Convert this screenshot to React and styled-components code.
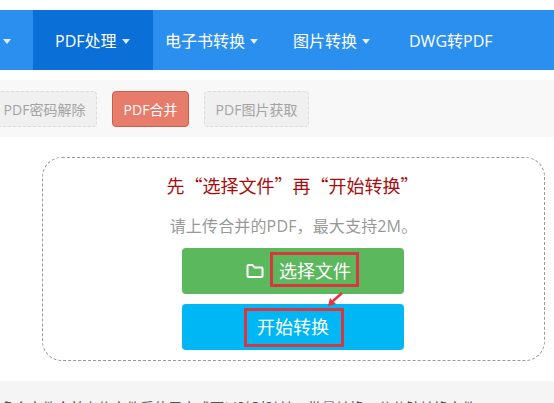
import React from 'react'
import styled, { createGlobalStyle } from 'styled-components'

const Global = createGlobalStyle`
  html, body { margin: 0; padding: 0; background: #fff; }
  body {
    width: 554px;
    height: 403px;
    overflow: hidden;
    font-family: "Open Sans", "Noto Sans CJK SC", sans-serif;
  }
`

const Page = styled.div`
  position: relative;
  padding-top: 10px;
  height: 393px;
  overflow: hidden;
`

const Nav = styled.nav`
  display: flex;
  height: 60px;
  background: #2b8ff0;
`

const NavItem = styled.a`
  display: flex;
  align-items: center;
  gap: 5px;
  flex: none;
  width: ${({ $w }) => $w}px;
  padding-left: ${({ $pad }) => $pad || 0}px;
  box-sizing: border-box;
  background: ${({ $active }) => ($active ? '#0a6fd6' : 'transparent')};
  color: #fff;
  font-size: 16px;
`

const Caret = styled.i`
  width: 0;
  height: 0;
  margin-top: 2px;
  margin-left: ${({ $ml }) => $ml || 0}px;
  border-left: 4px solid transparent;
  border-right: 4px solid transparent;
  border-top: 5px solid #fff;
  opacity: 0.85;
`

const SubBar = styled.div`
  display: flex;
  align-items: center;
  gap: 15px;
  height: 57px;
  margin-top: 10px;
  margin-left: -8px;
  background: #f8f8f8;
`

const Tag = styled.a`
  display: flex;
  align-items: center;
  justify-content: center;
  height: 36px;
  width: ${({ $w }) => $w}px;
  box-sizing: border-box;
  border-radius: 4px;
  font-size: 14px;
  border: 1px ${({ $on }) => ($on ? 'solid #c9604f' : 'dashed #dcdcdc')};
  background: ${({ $on }) => ($on ? '#e87c6b' : '#f0f0f0')};
  color: ${({ $on }) => ($on ? '#fff' : '#a3a3a3')};
`

const Main = styled.div`
  height: 244px;
  padding: 20px 0 0 42px;
  box-sizing: border-box;
`

const Drop = styled.div`
  width: 503px;
  height: 204px;
  box-sizing: border-box;
  border: 1px dashed #9a9a9a;
  border-radius: 20px;
  display: flex;
  flex-direction: column;
  align-items: center;
`

const Title = styled.div`
  margin: 15px 0 0 -2px;
  color: #a80d0d;
  font-family: "Noto Sans CJK SC", sans-serif;
  font-size: 18px;
  line-height: 24px;
`

const Hint = styled.div`
  margin-top: 18px;
  color: #999;
  font-size: 16px;
  line-height: 22px;
  letter-spacing: 0.15px;
`

const Btn = styled.a`
  display: flex;
  align-items: center;
  justify-content: center;
  width: 222px;
  height: 46px;
  margin: ${({ $mt }) => $mt}px 0 0 -1px;
  padding-left: ${({ $shift }) => $shift || 0}px;
  box-sizing: border-box;
  border-radius: 4px;
  color: #fff;
  font-size: 18px;
  background: ${({ $bg }) => $bg};
`

const FolderIcon = styled.svg`
  margin-right: 15px;
`

const Marked = styled.span`
  position: relative;
  display: block;
  line-height: 24px;
  &::after {
    content: '';
    position: absolute;
    left: -${({ $l }) => $l}px;
    right: -${({ $r }) => $r}px;
    top: -${({ $t }) => $t}px;
    bottom: -${({ $b }) => $b}px;
    border: 3px solid #d9373f;
  }
`

const Arrow = styled.svg`
  position: absolute;
  left: 326px;
  top: 290px;
`

const Footer = styled.div`
  background: #f5f5f5;
  height: 30px;
  padding-top: 18px;
  font-size: 14px;
  line-height: 18px;
  color: #555;
  white-space: nowrap;
  overflow: hidden;
`

export default function App() {
  return (
    <Page>
      <Global />
      <Nav>
        <NavItem $w={33}>
          <Caret $ml={3} />
        </NavItem>
        <NavItem $w={120} $pad={22} $active>
          PDF处理 <Caret />
        </NavItem>
        <NavItem $w={120} $pad={12}>
          电子书转换 <Caret />
        </NavItem>
        <NavItem $w={116} $pad={20}>
          图片转换 <Caret />
        </NavItem>
        <NavItem $w={120} $pad={20}>
          DWG转PDF
        </NavItem>
      </Nav>
      <SubBar>
        <Tag $w={105}>PDF密码解除</Tag>
        <Tag $w={77} $on>PDF合并</Tag>
        <Tag $w={105}>PDF图片获取</Tag>
      </SubBar>
      <Main>
        <Drop>
          <Title>先“选择文件”再“开始转换”</Title>
          <Hint>请上传合并的PDF，最大支持2M。</Hint>
          <Btn $bg="#5cb85c" $mt={11} $shift={11}>
            <FolderIcon width="18" height="16" viewBox="0 0 18 16" fill="none" stroke="#fff" strokeWidth="2" strokeLinejoin="round">
              <path d="M1.5 3a1 1 0 0 1 1-1h4l2 2.5h7a1 1 0 0 1 1 1V13a1 1 0 0 1-1 1h-13a1 1 0 0 1-1-1z" />
            </FolderIcon>
            <Marked $l={9} $r={8} $t={7} $b={4}>选择文件</Marked>
          </Btn>
          <Btn $bg="#00b7f5" $mt={10}>
            <Marked $l={13} $r={15} $t={7} $b={8}>开始转换</Marked>
          </Btn>
        </Drop>
      </Main>
      <Arrow width="18" height="18" viewBox="0 0 18 18">
        <path d="M16 3 7 11" stroke="#e8323c" strokeWidth="2.5" fill="none" />
        <path d="M2 16 4 8l6 6z" fill="#e8323c" />
      </Arrow>
      <Footer>多个文件合并上传文件后使用方式可以随时随地，批量转换，分分钟转换文件</Footer>
    </Page>
  )
}
